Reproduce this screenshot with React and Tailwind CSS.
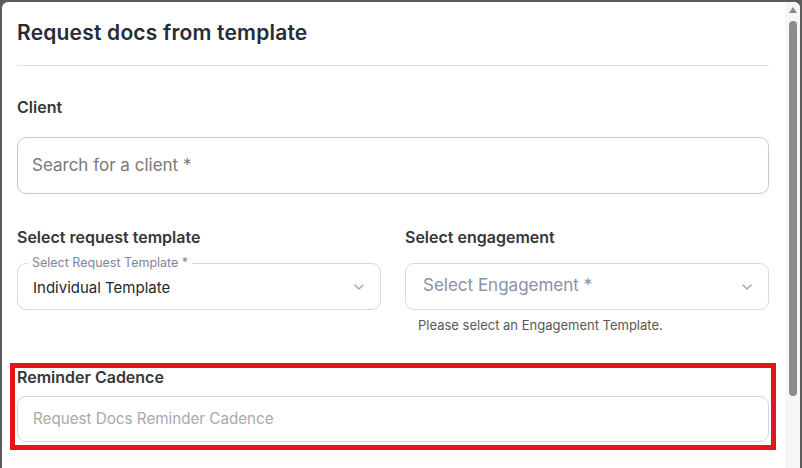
import React from "react";

function Chevron() {
  return (
    <svg width="12" height="8" viewBox="0 0 12 8" fill="none" className="shrink-0">
      <path d="M2 2 L6 6 L10 2" stroke="#a3a8b6" strokeWidth="1.5" strokeLinecap="round" strokeLinejoin="round" />
    </svg>
  );
}

export default function App() {
  return (
    <div
      className="relative w-[802px] h-[468px] bg-[#5c5c5c] pt-[2px] pl-[2px] overflow-hidden"
      style={{ fontFamily: "Inter, 'Noto Sans', sans-serif" }}
    >
      <div className="flex w-[798px] h-[466px] bg-white rounded-t-[6px] overflow-hidden">
        <div className="flex-1 flex flex-col pl-[15px] pr-[16px] pt-[17px]">
          <h1 className="text-[21px] leading-[28px] font-semibold text-[#272b36] tracking-[0.2px]">
            Request docs from template
          </h1>
          <div className="mt-[18px] border-t border-[#e3e3e3]" />

          <div className="mt-[31px] text-[16px] leading-[20px] font-semibold text-[#363636]">Client</div>
          <div className="mt-[20px] h-[57px] rounded-[9px] border border-[#c9c9c9] flex items-center pl-[14px]">
            <span className="text-[17px] text-[#7a7a7a]">Search for a client *</span>
          </div>

          <div className="mt-[33px] grid grid-cols-2 gap-x-[24px]">
            <div className="flex flex-col">
              <div className="text-[16px] leading-[20px] font-semibold text-[#363636]">Select request template</div>
              <div className="relative mt-[16px] h-[47px] rounded-[9px] border border-[#d6d9e2] flex items-center justify-between pl-[15px] pr-[15px]">
                <span className="absolute left-[10px] top-[-9px] bg-white px-[4px] text-[12.5px] leading-[16px] text-[#7d86a2]">
                  Select Request Template *
                </span>
                <span className="text-[15px] text-[#25272c] mt-[3px]">Individual Template</span>
                <Chevron />
              </div>
            </div>
            <div className="flex flex-col">
              <div className="text-[16px] leading-[20px] font-semibold text-[#363636]">Select engagement</div>
              <div className="mt-[16px] h-[47px] rounded-[9px] border border-[#d6d9e2] flex items-center justify-between pl-[17px] pr-[15px]">
                <span className="text-[17px] text-[#8a91a8] mb-[2px]">Select Engagement *</span>
                <Chevron />
              </div>
              <div className="mt-[7px] pl-[13px] text-[13px] leading-[16px] text-[#585858]">
                Please select an Engagement Template.
              </div>
            </div>
          </div>

          <div className="mt-[34px] text-[16px] leading-[20px] font-semibold text-[#363636]">Reminder Cadence</div>
          <div className="mt-[9px] h-[46px] rounded-[9px] border border-[#d2d5df] flex items-center pl-[15px]">
            <span className="text-[15.2px] text-[#a9a9a9]">Request Docs Reminder Cadence</span>
          </div>
        </div>

        <div className="w-[15px] h-full bg-[#f6f6f6] flex flex-col items-center pt-[5px]">
          <div className="w-0 h-0 border-l-[4px] border-r-[4px] border-b-[6px] border-l-transparent border-r-transparent border-b-[#8a8a8a]" />
          <div className="mt-[8px] w-[8px] h-[375px] rounded-full bg-[#8c8c8c]" />
        </div>
      </div>

      <div className="absolute left-[10px] top-[363px] w-[766px] h-[87px] border-[5px] border-[#e8141c]" />
    </div>
  );
}
